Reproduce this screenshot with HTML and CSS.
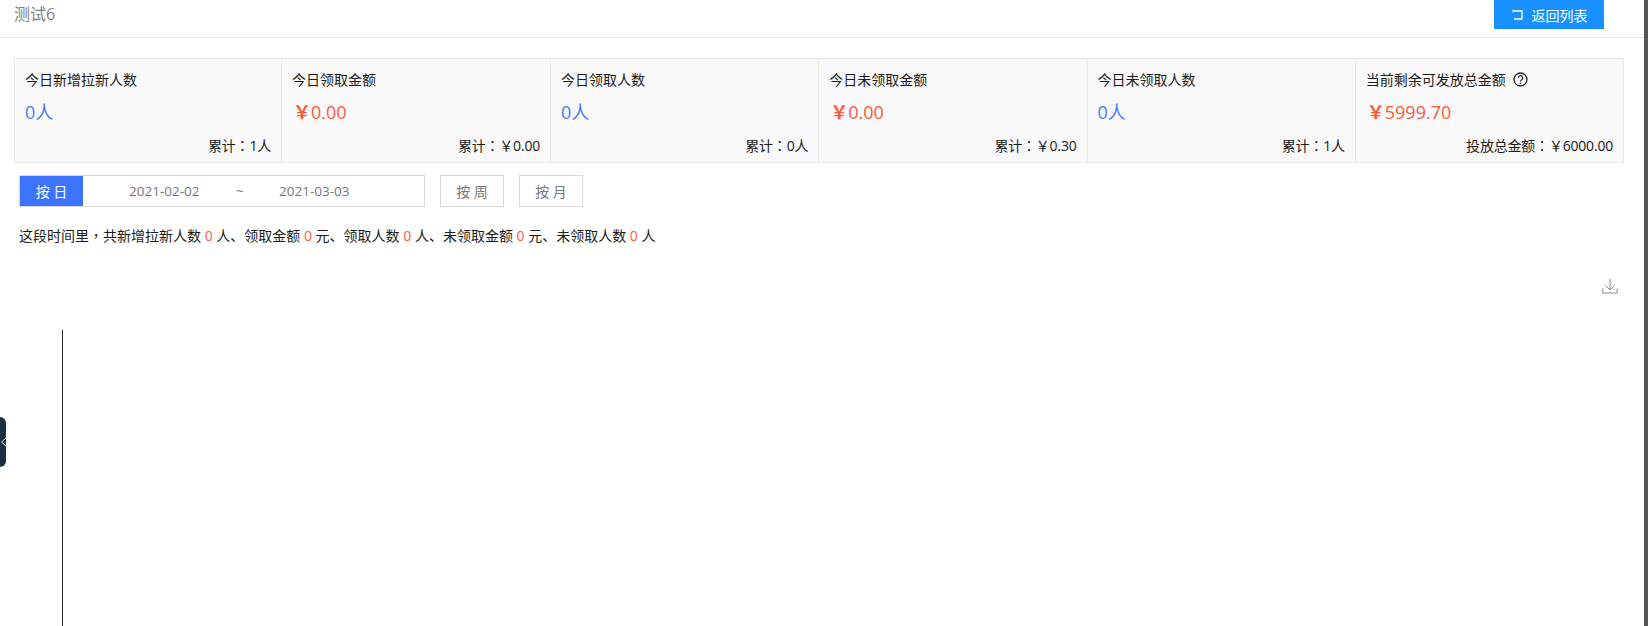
FILE: index.html
```html
<!DOCTYPE html>
<html lang="zh-CN">
<head>
<meta charset="utf-8">
<title>测试6</title>
<link rel="stylesheet" href="styles.css">
</head>
<body>
<div class="page">
  <header class="top">
    <span class="title">测试6</span>
    <a class="back">
      <svg class="back-icon" width="13" height="12" viewBox="0 0 13 12"><path d="M2 2H11V10H3" fill="none" stroke="#fff" stroke-width="1.3"/><path d="M2 .8V3.4" stroke="#cfe6ff" stroke-width="1.3"/></svg>
      返回列表
    </a>
  </header>
  <section class="cards">
    <div class="card"><div class="label">今日新增拉新人数</div><div class="val blue">0人</div><div class="foot">累计<span class="punct" lang="zh-TW">：</span>1人</div></div>
    <div class="card"><div class="label">今日领取金额</div><div class="val red"><span class="yen">￥</span>0.00</div><div class="foot">累计<span class="punct" lang="zh-TW">：</span>￥0.00</div></div>
    <div class="card"><div class="label">今日领取人数</div><div class="val blue">0人</div><div class="foot">累计<span class="punct" lang="zh-TW">：</span>0人</div></div>
    <div class="card"><div class="label">今日未领取金额</div><div class="val red"><span class="yen">￥</span>0.00</div><div class="foot">累计<span class="punct" lang="zh-TW">：</span>￥0.30</div></div>
    <div class="card"><div class="label">今日未领取人数</div><div class="val blue">0人</div><div class="foot">累计<span class="punct" lang="zh-TW">：</span>1人</div></div>
    <div class="card"><div class="label">当前剩余可发放总金额
      <svg class="help" width="15" height="15" viewBox="0 0 15 15"><circle cx="7.500" cy="7.500" r="6.500" fill="none" stroke="#222" stroke-width="1.300"/><path d="M5.300 6a2.200 2.200 0 1 1 3.300 1.800c-.8.4-1.100.7-1.100 1.600" fill="none" stroke="#222" stroke-width="1.200"/><circle cx="7.500" cy="11.200" r=".8" fill="#222"/></svg></div>
      <div class="val red"><span class="yen">￥</span>5999.70</div><div class="foot">投放总金额<span class="punct" lang="zh-TW">：</span>￥6000.00</div></div>
  </section>
  <section class="filters">
    <div class="range">
      <span class="range-btn">按 日</span>
      <span class="date">2021-02-02</span><span class="tilde">~</span><span class="date">2021-03-03</span>
    </div>
    <span class="btn">按 周</span>
    <span class="btn">按 月</span>
  </section>
  <p class="summary">这段时间里<span class="punct" lang="zh-TW">，</span>共新增拉新人数 <em>0</em> 人、领取金额 <em>0</em> 元、领取人数 <em>0</em> 人、未领取金额 <em>0</em> 元、未领取人数 <em>0</em> 人</p>
  <div class="tools">
    <svg width="16" height="16" viewBox="0 0 16 16"><path d="M8 1V11.500M3.500 7.500L8 12L12.500 7.500M.8 10.500V15H15.200V10.500" fill="none" stroke="#8c8c8c" stroke-width="1"/></svg>
  </div>
  <div class="chart"></div>
</div>
<div class="handle"><svg width="6" height="14" viewBox="0 0 6 14"><path d="M6 3L1.500 7L6 11" fill="none" stroke="#d5dbe0" stroke-width="1"/></svg></div>
<div class="scrollbar"></div>
</body>
</html>
```
FILE: styles.css
```css
html, body { margin: 0; padding: 0; height: 100%; overflow: hidden; background: #fff; }
body { font-family: "Open Sans", "Noto Sans CJK SC", sans-serif; font-size: 14px; color: #1a1a1a; }
.page { width: 1644px; height: 626px; display: flex; flex-direction: column; }
.top { height: 37px; flex: none; border-bottom: 1px solid #e4e4e4; display: flex; justify-content: space-between; align-items: flex-start; padding: 0 40px 0 14px; }
.title { font-size: 16px; line-height: 28px; color: #808080; }
.back { width: 110px; height: 29px; background: #1890ff; color: #fff; font-size: 14px; display: flex; align-items: center; justify-content: center; gap: 8px; }
.cards { margin: 20px 20px 0 14px; height: 105px; flex: none; display: grid; grid-template-columns: 266px 269px repeat(4, 1fr); border: 1px solid #e8e8e8; box-sizing: border-box; background: #f9f9f9; }
.card { padding: 11px 10px 0; border-left: 1px solid #e8e8e8; display: flex; flex-direction: column; min-width: 0; }
.card:first-child { border-left: 0; }
.label { font-size: 14px; line-height: 19px; color: #1a1a1a; display: flex; align-items: center; gap: 7px; }
.val { font-size: 18px; line-height: 24px; margin-top: 11px; }
.blue { color: #4d79ff; }
.red { color: #ff5a3c; }
.yen { margin-left: 1px; font-weight: 700; }
.foot { margin-top: 12px; text-align: right; font-size: 14px; line-height: 19px; color: #1a1a1a; letter-spacing: -.2px; }
.punct { font-family: "Noto Sans CJK TC", sans-serif; }
.filters { margin: 12px 0 0 19px; height: 32px; flex: none; display: flex; gap: 15px; }
.range { width: 406px; box-sizing: border-box; border: 1px solid #d9d9d9; display: flex; align-items: center; color: #777; font-size: 13.500px; }
.range-btn { width: 63px; height: 30px; background: #3d74ff; color: #fff; font-size: 14px; display: flex; align-items: center; justify-content: center; flex: none; }
.date { width: 72px; }
.range-btn + .date { margin-left: 46px; }
.tilde { width: 78px; padding-left: 35px; box-sizing: border-box; }
.btn { width: 64px; box-sizing: border-box; border: 1px solid #d9d9d9; display: flex; align-items: center; justify-content: center; color: #777; font-size: 14px; }
.summary { margin: 18px 0 0 19px; line-height: 20px; font-size: 14px; color: #1a1a1a; }
.summary em { font-style: normal; color: #ff5a3c; }
.tools { height: 16px; margin-top: 32px; padding-right: 26px; display: flex; justify-content: flex-end; flex: none; }
.chart { flex: 1; margin: 36px 0 0 62px; border-left: 1px solid #222; }
.handle { position: absolute; left: 0; top: 417px; width: 6px; height: 50px; background: #1b2f44; border-radius: 0 6px 6px 0; display: flex; align-items: center; overflow: hidden; }
.scrollbar { position: absolute; right: 0; top: 0; width: 4px; height: 626px; background: #555; }
```
